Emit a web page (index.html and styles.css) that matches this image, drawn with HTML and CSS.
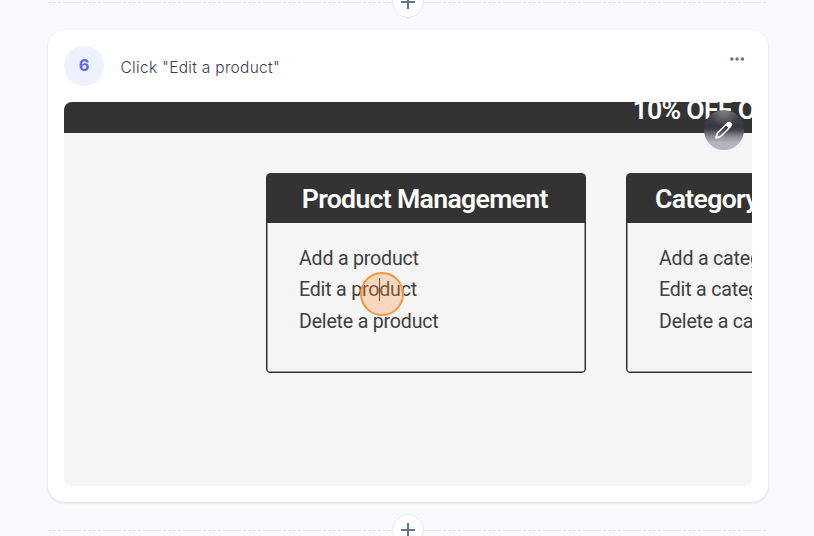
FILE: index.html
```html
<!DOCTYPE html>
<html lang="en">
<head>
<meta charset="utf-8">
<title>Guide steps</title>
<link rel="stylesheet" href="styles.css">
</head>
<body>
<main class="steps">
  <div class="connector">
    <button class="add" aria-label="Add step"><svg width="14" height="14" viewBox="0 0 14 14"><path d="M7 0v14M0 7h14"/></svg></button>
  </div>
  <article class="card">
    <header class="head">
      <span class="num">6</span>
      <h2 class="title">Click "Edit a product"</h2>
      <button class="more" aria-label="More"><svg width="14" height="4" viewBox="0 0 14 4"><circle cx="1.9" cy="2" r="1.75"/><circle cx="7.1" cy="2" r="1.75"/><circle cx="12.3" cy="2" r="1.75"/></svg></button>
    </header>
    <div class="shot">
      <div class="banner"><span>10% OFF O</span></div>
      <div class="panels">
        <section class="panel">
          <h3>Product Management</h3>
          <ul><li>Add a product</li><li>Edit a product</li><li>Delete a product</li></ul>
        </section>
        <section class="panel">
          <h3>Category Management</h3>
          <ul><li>Add a category</li><li>Edit a category</li><li>Delete a category</li></ul>
        </section>
      </div>
      <i class="caret"></i>
      <i class="target"></i>
      <button class="edit" aria-label="Edit image"><svg width="20" height="20" viewBox="0 0 20 20"><path d="M2 18l1.3-4.7L13.1 3.500a2.100 2.100 0 0 1 3.200 3.200L6.700 16.500z"/><path class="tip" d="M11.900 4.700l1.700-1.700a2.200 2.200 0 0 1 3.300 3.300l-1.700 1.700z"/></svg></button>
    </div>
  </article>
  <div class="connector">
    <button class="add" aria-label="Add step"><svg width="14" height="14" viewBox="0 0 14 14"><path d="M7 0v14M0 7h14"/></svg></button>
  </div>
</main>
</body>
</html>
```
FILE: styles.css
```css
* { box-sizing: border-box; }
body { margin: 0; height: 536px; overflow: hidden; background: #f8fafc; font-family: Inter, sans-serif; }
button { padding: 0; border: 0; background: none; }
svg { display: block; }
.steps { width: 720px; margin: -14px 0 0 48px; display: flex; flex-direction: column; gap: 12px; }
.connector {
  height: 32px; display: flex; justify-content: center;
  background: repeating-linear-gradient(90deg, #e2e8f0 0 3px, transparent 3px 5px) 0 16px / 100% 1px no-repeat;
}
.add { width: 32px; height: 32px; display: grid; place-items: center; border: 1px solid #e2e8f0; border-radius: 50%; background: #fff; }
.add path { stroke: #64748b; stroke-width: 2; fill: none; }
.card { height: 472px; padding: 16px; background: #fff; border-radius: 16px; box-shadow: 0 1px 3px rgba(15, 23, 42, .1), 0 1px 2px rgba(15, 23, 42, .06); }
.head { height: 40px; margin-bottom: 16px; display: flex; align-items: center; }
.num { width: 40px; height: 40px; border-radius: 50%; background: #eef2ff; color: #6366f1; font-weight: 700; font-size: 16.5px; line-height: 39px; text-align: center; }
.title { flex: 1; margin: 4px 0 0 16.5px; color: #334155; font-size: 15.5px; font-weight: 350; line-height: 24px; letter-spacing: .3px; white-space: nowrap; }
.more { margin: 0 8px 14px 0; }
.more circle { fill: #64748b; }
.shot { position: relative; height: 384px; overflow: hidden; border-radius: 8px; background: #f5f5f5; font-family: Roboto, sans-serif; color: #404040; }
.banner { height: 31px; padding-left: 568.5px; background: #333; color: #fff; font-size: 26.6px; font-weight: 600; line-height: 16px; letter-spacing: -.7px; white-space: nowrap; }
.panels { display: flex; gap: 40px; margin: 40px 0 0 201.5px; }
.panel { flex: none; width: 320px; height: 200px; border: 1px solid #333; border-radius: 4px; overflow: hidden; box-shadow: inset 0 0 0 .5px #333; }
.panel h3 { height: 49px; margin: 0; padding-right: 1.5px; background: #333; color: #fff; font-size: 26.6px; font-weight: 600; line-height: 49px; letter-spacing: -.66px; text-align: center; white-space: nowrap; }
.panel ul { list-style: none; margin: 20.200px 0 0; padding: 0 0 0 32.5px; font-size: 19.6px; line-height: 31.2px; letter-spacing: -.2px; white-space: nowrap; }
.target { position: absolute; left: 296px; top: 170px; width: 44px; height: 44px; border: 2px solid #fb923c; border-radius: 50%; background: rgba(251, 146, 60, .3); }
.caret { position: absolute; left: 315px; top: 176px; width: 1px; height: 23px; background: #333; }
.edit { position: absolute; left: 640px; top: 8px; width: 40px; height: 40px; display: grid; place-items: center; border-radius: 50%; background: radial-gradient(circle at 50% 5%, rgba(255, 255, 255, .3), transparent 35%), linear-gradient(#494b50 0, #34373d 42%, #42454b 50%, #898c94 66%, #b2b5bd 82%); }
.edit path { fill: none; stroke: #fff; stroke-width: 1.6; stroke-linejoin: round; }
.edit .tip { fill: #fff; stroke-width: 1; }
```
